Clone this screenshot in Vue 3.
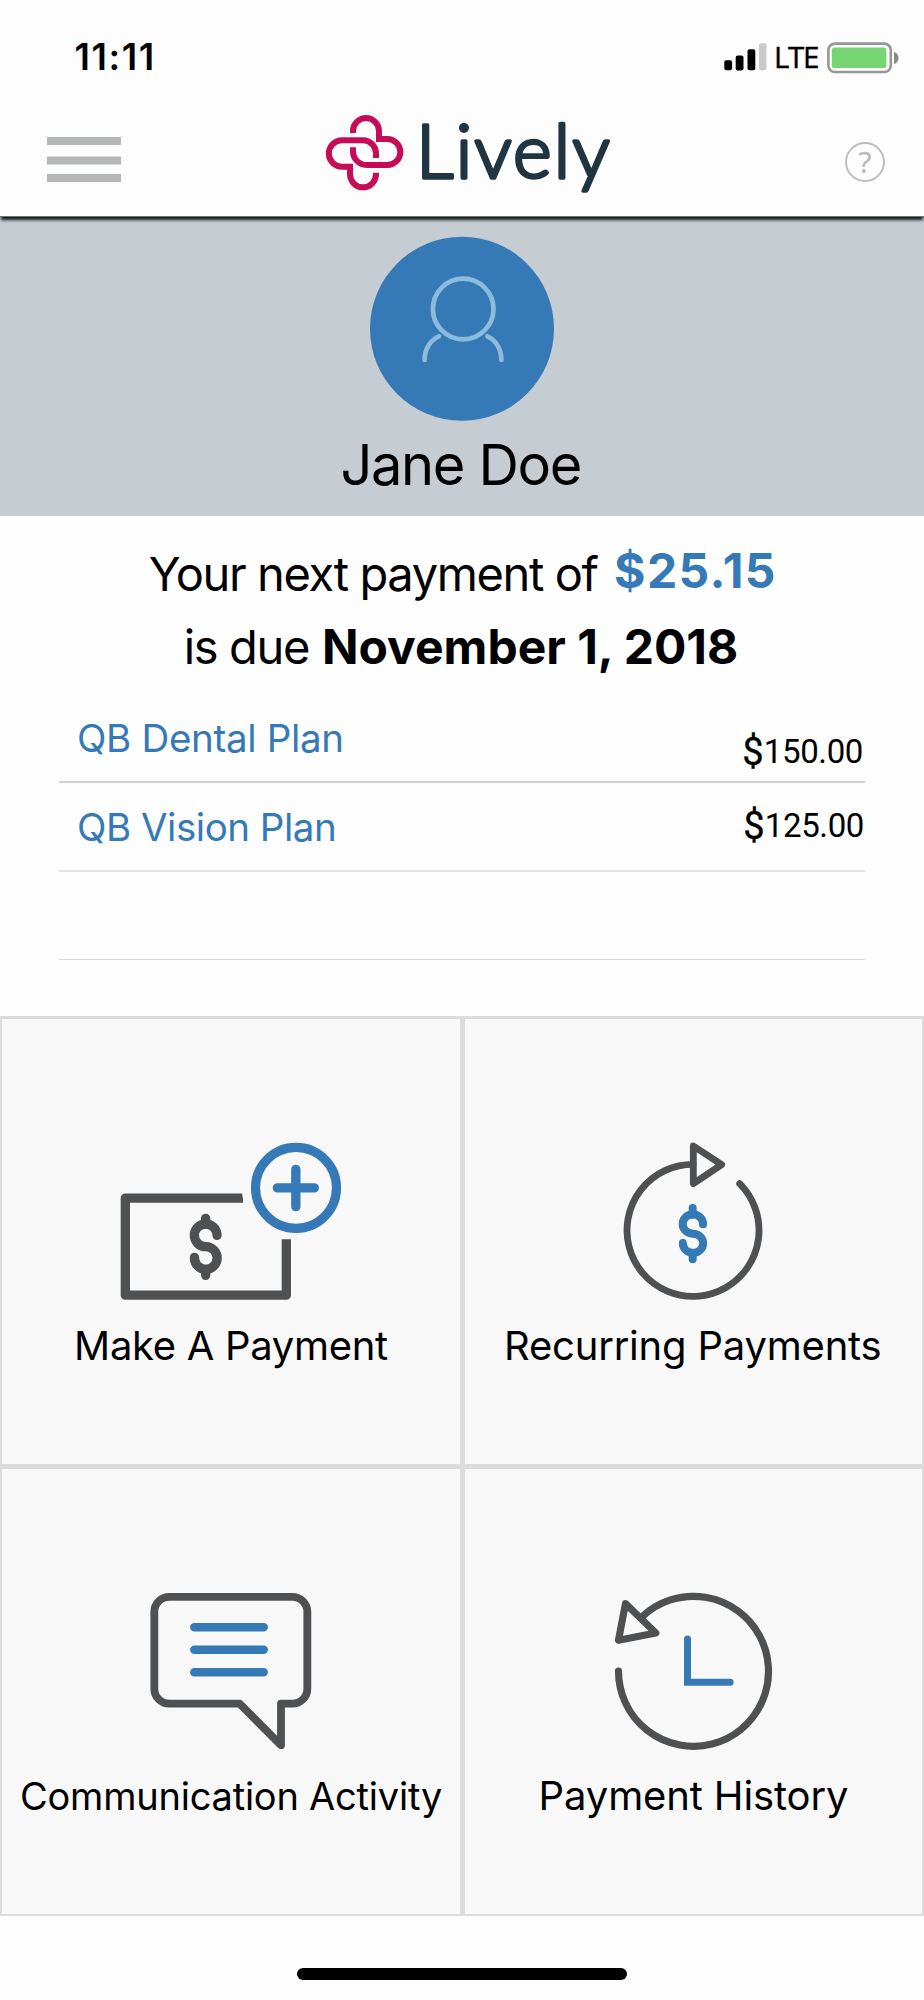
<script setup>
const plans = [
  { name: 'QB Dental Plan', amount: '150.00', key: 'dental' },
  { name: 'QB Vision Plan', amount: '125.00', key: 'vision' },
]
</script>

<template>
  <div class="screen">
    <header class="header">
      <div class="status">
        <span class="time">11:11</span>
        <div class="indicators">
          <svg class="signal" width="43" height="28" viewBox="0 0 43 28">
            <rect x="0.3" y="17.3" width="7.8" height="10" rx="2" />
            <rect x="11.7" y="12.4" width="7.8" height="15" rx="2" />
            <rect x="23.5" y="6.3" width="7.8" height="21" rx="2" />
            <rect x="35" y="0.3" width="7.4" height="27" rx="2" fill="#cacaca" />
          </svg>
          <span class="network">LTE</span>
          <svg class="battery" width="72" height="32" viewBox="0 0 72 32">
            <rect x="1.4" y="1.6" width="62.4" height="28.4" rx="6.5" fill="#fff" stroke="#979797" stroke-width="2.6" />
            <rect x="4.8" y="5.6" width="54.6" height="20.4" rx="2.5" fill="#77d673" />
            <path d="M67 10 C73 11 73 21 67 22 Z" fill="#8a8a8a" />
          </svg>
        </div>
      </div>
      <nav class="bar">
        <svg class="menu" width="76" height="50" viewBox="0 0 76 50">
          <rect x="1" y="2" width="74" height="8" />
          <rect x="1" y="21.5" width="74" height="8" />
          <rect x="1" y="39" width="74" height="8" />
        </svg>
        <svg class="logo" width="310" height="110" viewBox="0 0 930 330">
          <g fill="none" stroke="#c60c57" stroke-width="18">
            <path d="M129 99 V93 A39 39 0 0 1 207 93 V117 H232 A39 39 0 0 1 232 195 H170 A41 41 0 0 1 129 154 V142" />
            <path d="M198 174 V160 A39 39 0 0 0 159 121 H96 A39.5 39.5 0 0 0 96 200 H120 V223 A39 39 0 0 0 198 223 V218" />
          </g>
          <text x="318" y="234" class="wordmark">Lively</text>
        </svg>
        <svg class="help" width="42" height="42" viewBox="0 0 42 42">
          <circle cx="21" cy="21" r="19" fill="none" stroke="#bcbcbc" stroke-width="1.9" />
          <text x="21" y="31.6" text-anchor="middle">?</text>
        </svg>
      </nav>
    </header>

    <section class="profile">
      <svg class="avatar" width="186" height="186" viewBox="0 0 186 186">
        <circle cx="93" cy="92.7" r="92" fill="#357ab6" />
        <g fill="none" stroke="#8dbbdb" stroke-width="4.7" stroke-linecap="round">
          <circle cx="94.2" cy="73" r="30.3" />
          <path d="M70 100.3 C61 104 55.6 113.5 55.6 124" />
          <path d="M118.4 100.3 C127 104 132.4 113.5 132.4 124" />
        </g>
      </svg>
      <h1 class="name">Jane Doe</h1>
    </section>

    <section class="due">
      <p class="line first"><span class="lead">Your next payment of</span><strong class="sum">$25.15</strong></p>
      <p class="line second"><span class="lead">is due</span><strong class="date">November 1, 2018</strong></p>
    </section>

    <ul class="plans">
      <li v-for="p in plans" :key="p.key" :class="p.key">
        <span class="plan">{{ p.name }}</span>
        <span class="amount"><span class="cur">$</span><span class="num">{{ p.amount }}</span></span>
      </li>
      <li class="empty"></li>
    </ul>

    <section class="tiles">
      <div class="tile">
        <svg width="240" height="160" viewBox="333 423 720 480">
          <g fill="none" stroke="#4f5052" stroke-width="28" stroke-linejoin="round">
            <path d="M729 594.5 H376 V885.5 H859 V718" />
            <path d="M651 706 A34 34 0 1 0 617 740 A34 34 0 1 1 583.5 772" stroke-linecap="round" />
            <path d="M617 655 V672 M617 808 V826" stroke-linecap="round" />
          </g>
          <path d="M726 578 L731.5 612 H744 V578 Z" fill="#f8f8f8" />
          <circle cx="888" cy="563.5" r="121.5" fill="none" stroke="#357ab6" stroke-width="27.5" />
          <path d="M832 563.5 H943 M887.5 508 V620" stroke="#357ab6" stroke-width="28" stroke-linecap="round" />
        </svg>
        <span class="label make">Make A Payment</span>
      </div>
      <div class="tile">
        <svg width="240" height="160" viewBox="359 423 720 480">
          <g fill="none" stroke="#4f5052" stroke-width="20.5" stroke-linejoin="round" stroke-linecap="round">
            <path d="M716 493 A198 198 0 1 0 856 551" />
            <path d="M717 438 L802 494 L717 551 Z" />
          </g>
          <g fill="none" stroke="#357ab6" stroke-width="24" stroke-linecap="round">
            <path d="M746 673 A30.5 29 0 1 0 715 701 A30.5 29 0 1 1 685.5 729" />
            <path d="M715 624 V644 M715 758 V778" />
          </g>
        </svg>
        <span class="label recurring">Recurring Payments</span>
      </div>
      <div class="tile">
        <svg width="240" height="160" viewBox="333 423 720 480">
          <path
            d="M508 440.5 H877 A45 45 0 0 1 922 485.5 V716 A45 45 0 0 1 877 761 H843 V886 L719 761 H508 A45 45 0 0 1 463 716 V485.5 A45 45 0 0 1 508 440.5 Z"
            fill="none" stroke="#4f5052" stroke-width="23.5" stroke-linejoin="round"
          />
          <path d="M583 531.5 H791 M583 599 H791 M583 666.5 H791" stroke="#357ab6" stroke-width="25.5" stroke-linecap="round" />
        </svg>
        <span class="label comm">Communication Activity</span>
      </div>
      <div class="tile">
        <svg width="240" height="160" viewBox="359.5 423 720 480">
          <g fill="none" stroke="#4f5052" stroke-width="21.5" stroke-linejoin="round" stroke-linecap="round">
            <path d="M493 663 A225 225 0 1 0 564 500" />
            <path d="M514 461 L605 549 L493 570.5 Z" />
          </g>
          <path d="M700 567 V696.5 H828" fill="none" stroke="#357ab6" stroke-width="21" stroke-linecap="round" />
        </svg>
        <span class="label history">Payment History</span>
      </div>
    </section>

    <div class="home"></div>
  </div>
</template>

<style>
body {
  background: #fefefe;
}
</style>

<style scoped>
.screen {
  width: 924px;
  height: 2000px;
  overflow: hidden;
  background: #fefefe;
  font-family: Inter, "Liberation Sans", sans-serif;
  color: #000;
}
.header {
  position: relative;
  z-index: 1;
  box-sizing: border-box;
  height: 217px;
  background: #fdfdfd;
  border-bottom: 1px solid #6d746e;
  box-shadow: 0 4px 3px -1px #15181b;
}
.status {
  display: flex;
  justify-content: space-between;
  align-items: flex-start;
  height: 100px;
  padding: 0 25.5px 0 74.5px;
}
.time {
  margin-top: 35.7px;
  line-height: 42px;
  font-size: 36.5px;
  font-weight: 600;
  letter-spacing: 1.6px;
}
.indicators {
  display: flex;
  align-items: flex-start;
}
.signal {
  margin-top: 43px;
}
.network {
  width: 59.5px;
  padding-left: 7px;
  box-sizing: border-box;
  margin-top: 37px;
  font-family: "Open Sans", sans-serif;
  font-size: 29.5px;
  font-weight: 500;
  line-height: 40px;
  letter-spacing: -1.3px;
  -webkit-text-stroke: 0.4px #000;
}
.battery {
  margin-top: 41.5px;
}
.bar {
  display: flex;
  justify-content: space-between;
  height: 110px;
  padding: 0 38px 0 46px;
}
.menu {
  margin-top: 35px;
  fill: #b4b7b6;
}
.logo {
  margin-right: 37px;
}
.wordmark {
  font-family: Lato, sans-serif;
  font-size: 222px;
  font-weight: 300;
  letter-spacing: 6.8px;
  fill: #203442;
  stroke: #203442;
  stroke-width: 10.5px;
  stroke-linejoin: round;
}
.help {
  margin-top: 40.7px;
}
.help text {
  font-family: "Open Sans", sans-serif;
  font-size: 30px;
  fill: #b9b9b9;
  stroke: #b9b9b9;
  stroke-width: 0.3px;
}
.profile {
  display: flex;
  flex-direction: column;
  align-items: center;
  height: 299px;
  background: #c5cdd3;
}
.avatar {
  margin-top: 18.5px;
}
.name {
  margin: 8px 0 0;
  padding-right: 2.5px;
  font-size: 56px;
  font-weight: 400;
  line-height: 70px;
  letter-spacing: -1.36px;
}
.due {
  height: 157px;
  padding-top: 21px;
}
.line {
  display: flex;
  margin: 0;
  height: 74px;
  line-height: 74px;
  font-size: 48px;
  white-space: nowrap;
}
.first {
  padding-left: 148.8px;
  gap: 16.5px;
}
.second {
  margin-top: -1px;
  padding-left: 183.8px;
  gap: 13px;
}
.lead {
  font-size: 47px;
  letter-spacing: -1.38px;
}
.line strong {
  font-weight: 700;
}
.sum {
  margin-top: -3px;
  color: #357ab6;
  letter-spacing: 1.43px;
}
.plans {
  margin: 1px 59px 0;
  padding: 0;
  list-style: none;
}
.plans li {
  box-sizing: border-box;
  display: flex;
  justify-content: space-between;
  height: 89px;
  padding-left: 18px;
  line-height: 88px;
  border-bottom: 2px solid #d0d1d1;
}
.plans li.dental {
  height: 89px;
}
.plans li.vision {
  border-color: #e2e2e2;
}
.plans li.empty {
  height: 88px;
  border-bottom: 1px solid #d6d6d6;
}
.due + .plans {
  margin-top: 1px;
}
.plan {
  font-size: 38.5px;
  color: #357ab6;
  letter-spacing: -0.32px;
}
.vision .plan {
  letter-spacing: -0.48px;
}
.amount {
  display: flex;
  align-items: flex-start;
  font-family: Roboto, sans-serif;
}
.dental .amount {
  margin: 14px 2px 0 0;
}
.vision .amount {
  margin: -1px 1px 0 0;
}
.cur {
  width: 21.5px;
  font-size: 38px;
  -webkit-text-stroke: 0.3px #000;
}
.num {
  font-size: 33px;
  letter-spacing: -0.38px;
}
.due {
  height: 156px;
}
.tiles {
  display: grid;
  grid-template-columns: 458px 457px;
  grid-template-rows: 445px 445px;
  gap: 5px;
  margin-top: 56px;
  padding: 2.5px 2px;
  background: #dcdcdc;
}
.tile {
  display: flex;
  flex-direction: column;
  align-items: center;
  background: #f8f8f8;
}
.tile svg {
  flex: none;
  margin-top: 122.5px;
}
.label {
  margin-top: 14.5px;
  line-height: 60px;
  font-size: 40px;
  white-space: nowrap;
}
.make {
  letter-spacing: -0.3px;
}
.recurring {
  padding-right: 1.5px;
  letter-spacing: -0.2px;
}
.comm {
  font-size: 38px;
  letter-spacing: -0.22px;
}
.history {
  letter-spacing: -0.12px;
}
.home {
  width: 330px;
  height: 12px;
  margin: 52px auto 0;
  border-radius: 6px;
  background: #000;
}
</style>
